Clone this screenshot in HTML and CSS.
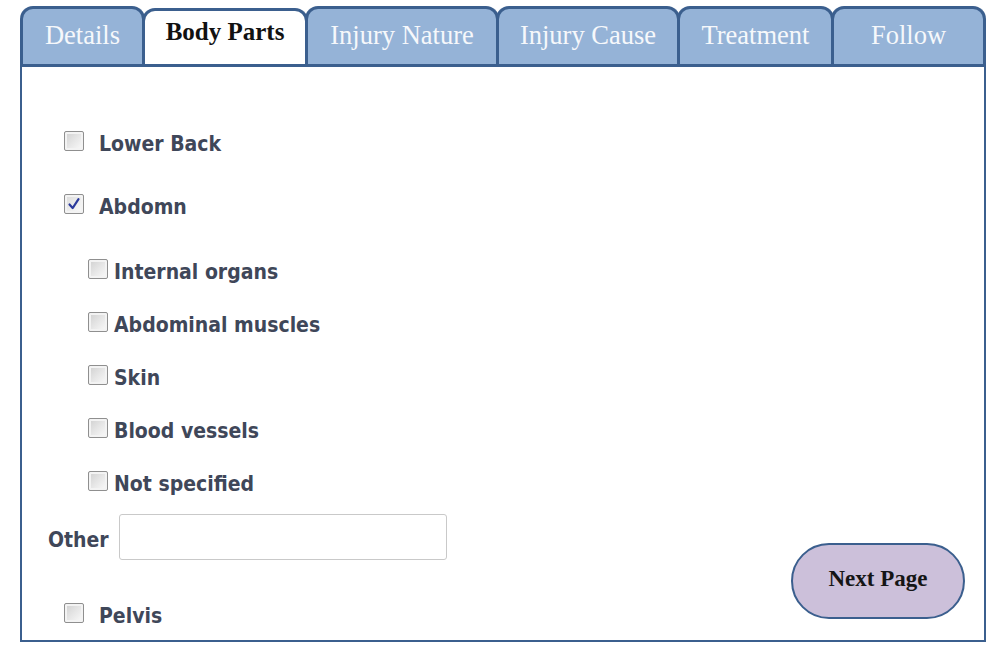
FILE: index.html
```html
<!DOCTYPE html>
<html lang="en">
<head>
<meta charset="utf-8">
<title>Body Parts</title>
<link rel="stylesheet" href="styles.css">
</head>
<body>
<div class="frame">
  <div class="tabs">
    <div class="tab tab-details">Details</div>
    <div class="tab tab-body active">Body Parts</div>
    <div class="tab tab-nature">Injury Nature</div>
    <div class="tab tab-cause">Injury Cause</div>
    <div class="tab tab-treat">Treatment</div>
    <div class="tab tab-follow">Follow</div>
  </div>
  <div class="panel">
    <div class="list">
      <label class="row main r-lower"><span class="cb"></span><span class="txt">Lower Back</span></label>
      <label class="row main r-abd"><span class="cb checked"><svg viewBox="0 0 20 20" width="18" height="18"><path d="M5 10.5 L8.5 14.5 L15 4.5" fill="none" stroke="#2b3a9c" stroke-width="2.4" stroke-linecap="round" stroke-linejoin="round"/></svg></span><span class="txt">Abdomn</span></label>
      <label class="row sub r-first"><span class="cb"></span><span class="txt">Internal organs</span></label>
      <label class="row sub"><span class="cb"></span><span class="txt">Abdominal muscles</span></label>
      <label class="row sub"><span class="cb"></span><span class="txt">Skin</span></label>
      <label class="row sub"><span class="cb"></span><span class="txt">Blood vessels</span></label>
      <label class="row sub"><span class="cb"></span><span class="txt">Not specified</span></label>
      <div class="row other"><span class="txt">Other</span><span class="input"></span></div>
      <label class="row main r-pelvis"><span class="cb"></span><span class="txt">Pelvis</span></label>
    </div>
    <div class="side">
      <div class="next">Next Page</div>
    </div>
  </div>
</div>
</body>
</html>
```

FILE: styles.css
```css
html, body {
  margin: 0;
  padding: 0;
  background: #ffffff;
}
body {
  width: 1000px;
  height: 654px;
  overflow: hidden;
}
.frame {
  margin: 6px 0 0 20px;
  width: 966px;
}
.tabs {
  display: flex;
  height: 58px;
}
.tab {
  box-sizing: border-box;
  height: 58px;
  margin-right: -3px;
  border: 3px solid #3b5f8e;
  border-bottom: none;
  border-radius: 13px 13px 0 0;
  background: #95b3d7;
  color: #f6f8fb;
  font-family: "Liberation Serif", "Times New Roman", serif;
  font-size: 26.5px;
  display: flex;
  align-items: center;
  justify-content: center;
  padding-bottom: 2px;
}
.tab:last-child { margin-right: 0; }
.tab-details { width: 125px; }
.tab-body { width: 166px; }
.tab-nature { width: 194px; }
.tab-cause { width: 184px; }
.tab-treat { width: 157px; }
.tab-follow { width: 155px; }
.tab.active {
  background: #ffffff;
  color: #111111;
  font-weight: bold;
  font-size: 25px;
  margin-top: 2px;
  height: 56px;
  padding-bottom: 11px;
  position: relative;
  z-index: 1;
}
.panel {
  box-sizing: border-box;
  height: 578px;
  border: 2px solid #3b5f8e;
  border-top: 3px solid #3b5f8e;
  display: flex;
}
.list {
  flex: 1;
  display: flex;
  flex-direction: column;
  padding-left: 42px;
  padding-top: 62px;
}
.row {
  display: flex;
  align-items: center;
  height: 30px;
  font-family: "DejaVu Sans", Verdana, sans-serif;
  font-stretch: semi-condensed;
  font-weight: bold;
  font-size: 21px;
  color: #3f4759;
}
.cb {
  box-sizing: border-box;
  width: 20px;
  height: 20px;
  border: 1px solid #8f8f8f;
  border-radius: 2px;
  background: linear-gradient(135deg, #cfcfcf 0%, #e6e6e6 50%, #fbfbfb 100%);
  box-shadow: inset 0 0 0 2px #f3f3f3;
  margin-bottom: 7px;
  display: flex;
  align-items: center;
  justify-content: center;
  flex: none;
}
.cb.checked {
  background: linear-gradient(135deg, #d9d9d9 0%, #ececec 50%, #fbfbfb 100%);
}
.main .cb { margin-right: 15px; }
.sub { margin-left: 24px; margin-top: 23px; }
.sub .cb { margin-right: 6px; }
.r-abd { margin-top: 33px; }
.sub.r-first { margin-top: 35px; }
.other {
  height: 46px;
  margin-top: 15px;
  margin-left: -16px;
}
.other .txt { margin-top: 6px; }
.input {
  box-sizing: border-box;
  width: 328px;
  height: 46px;
  margin-left: 10px;
  border: 1px solid #c9c9c9;
  border-radius: 3px;
  background: #ffffff;
}
.r-pelvis { margin-top: 41px; }
.side {
  display: flex;
  align-items: flex-end;
  padding: 0 19px 21px 0;
}
.next {
  box-sizing: border-box;
  width: 174px;
  height: 76px;
  border: 2px solid #3b5f8e;
  border-radius: 38px;
  background: #ccc0da;
  color: #151515;
  font-family: "Liberation Serif", "Times New Roman", serif;
  font-weight: bold;
  font-size: 23px;
  display: flex;
  align-items: center;
  justify-content: center;
  padding-bottom: 5px;
}
```
